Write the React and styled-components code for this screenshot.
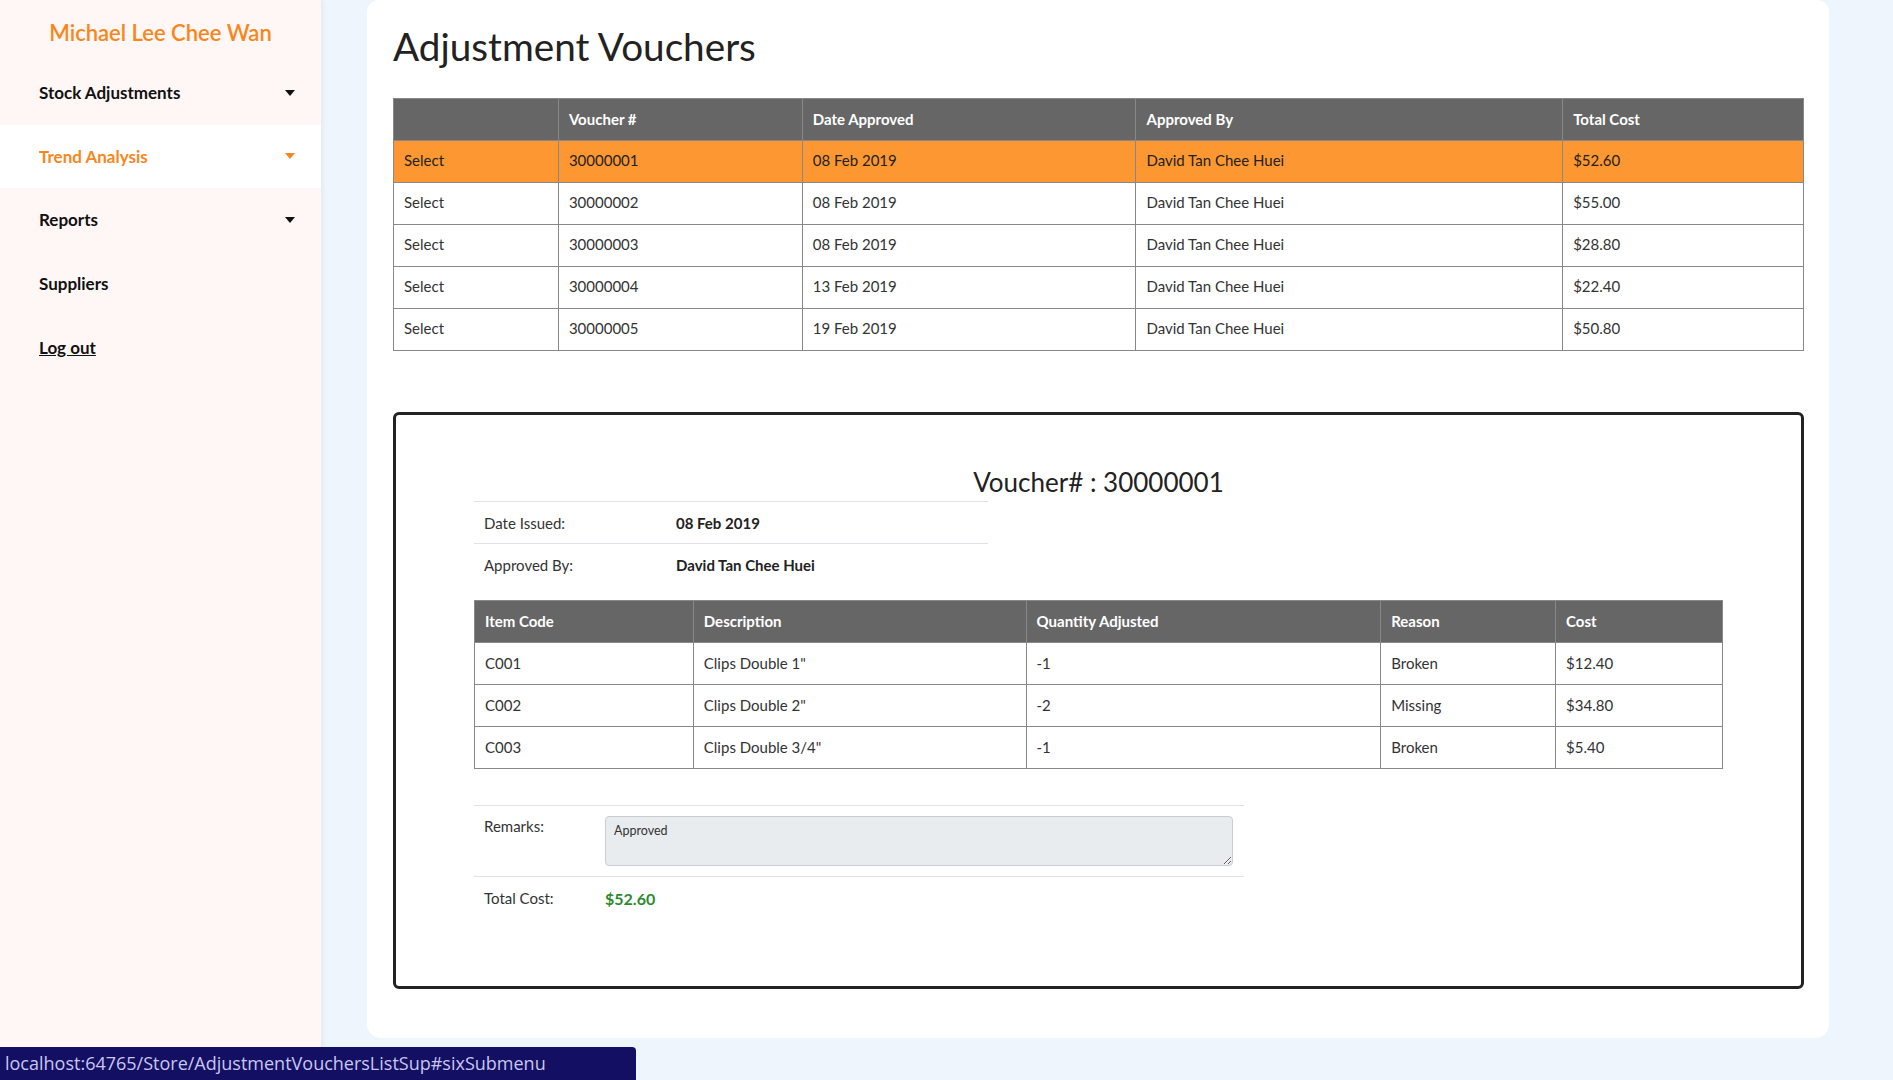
import React from "react";
import styled, { createGlobalStyle } from "styled-components";

const GlobalStyle = createGlobalStyle`
  html, body { margin: 0; padding: 0; }
  body {
    background: #eef5fd;
    font-family: Lato, "Open Sans", sans-serif;
    color: #222;
  }
  * { box-sizing: border-box; }
`;

const Layout = styled.div`
  display: flex;
  min-height: 1080px;
`;

const Sidebar = styled.nav`
  width: 321px;
  flex: 0 0 321px;
  background: #fff7f6;
  box-shadow: 2px 0 4px rgba(0, 0, 0, 0.05);
  min-height: 1080px;
`;

const UserName = styled.div`
  padding-top: 14px;
  height: 61px;
  line-height: 38px;
  text-align: center;
  font-size: 22px;
  color: #f7861c;
  font-weight: 600;
`;

const MenuList = styled.ul`
  list-style: none;
  margin: 0;
  padding: 0;
`;

const MenuItem = styled.li`
  height: 63.6px;
  display: flex;
  align-items: center;
  justify-content: space-between;
  padding: 0 26px 0 39px;
  font-size: 17px;
  font-weight: 700;
  color: ${(p) => (p.$active ? "#f7861c" : "#111")};
  background: ${(p) => (p.$active ? "#ffffff" : "transparent")};
  text-decoration: ${(p) => (p.$link ? "underline" : "none")};
`;

const Caret = styled.span`
  width: 0;
  height: 0;
  border-left: 5px solid transparent;
  border-right: 5px solid transparent;
  border-top: 6px solid ${(p) => (p.$active ? "#f7861c" : "#111")};
`;

const Main = styled.main`
  flex: 1;
  padding: 0 64px 42px 46px;
`;

const Card = styled.section`
  background: #fff;
  border-radius: 12px 12px 14px 14px;
  height: 1038px;
  padding: 20px 25px 0 26px;
`;

const Title = styled.h1`
  margin: 0 0 26px;
  font-size: 38.7px;
  line-height: 52px;
  font-weight: 400;
  color: #222;
`;

const Table = styled.table`
  width: 100%;
  border-collapse: collapse;
  font-size: 15px;
  color: #333;
`;

const HeadCell = styled.th`
  height: 42px;
  padding: ${(p) => (p.$raised ? "0 10px 2px" : "0 10px")};
  text-align: left;
  font-weight: 700;
  color: #fff;
  background: #666;
  border: 1px solid #888;
`;

const Row = styled.tr`
  background: ${(p) => (p.$selected ? "#fd9732" : "#fff")};
  color: ${(p) => (p.$selected ? "#222" : "#333")};
`;

const Cell = styled.td`
  height: 42px;
  padding: ${(p) => (p.$raised ? "0 10px 4px" : "0 10px")};
  border: 1px solid #888;
`;

const Detail = styled.div`
  margin-top: 61px;
  border: 3px solid #222;
  border-radius: 6px;
  height: 577px;
  padding: 50px 78px 0;
`;

const DetailTitle = styled.h2`
  margin: 0 0 2px;
  text-align: center;
  font-size: 26px;
  line-height: 34px;
  font-weight: 400;
  color: #222;
`;

const InfoTable = styled.table`
  width: ${(p) => p.$width};
  border-collapse: collapse;
  font-size: 15px;
  color: #333;
  margin: ${(p) => p.$margin || "0"};
`;

const InfoLabel = styled.td`
  width: ${(p) => p.$w};
  height: ${(p) => p.$h || "42px"};
  padding: ${(p) => p.$pad || "0 10px"};
  vertical-align: ${(p) => p.$va || "middle"};
  border-top: 1px solid #dee2e6;
`;

const InfoValue = styled.td`
  padding: ${(p) => p.$pad || "0 10px"};
  vertical-align: middle;
  font-weight: 700;
  color: ${(p) => p.$color || "#222"};
  font-size: ${(p) => p.$size || "15px"};
  border-top: 1px solid #dee2e6;
`;

const Remarks = styled.textarea`
  display: block;
  width: 628px;
  height: 50px;
  background: #e9ecef;
  border: 1px solid #c9ced4;
  border-radius: 4px;
  padding: 6px 8px;
  font-family: Lato, sans-serif;
  font-size: 12.5px;
  color: #333;
  resize: both;
`;

const StatusBar = styled.div`
  position: fixed;
  left: 0;
  bottom: 0;
  width: 636px;
  height: 33px;
  background: #130f63;
  color: #c9c6f0;
  border-top-right-radius: 4px;
  font-family: "Open Sans", "Noto Sans", sans-serif;
  font-size: 18px;
  line-height: 33px;
  padding-left: 5px;
  white-space: nowrap;
`;

const vouchers = [
  ["30000001", "08 Feb 2019", "David Tan Chee Huei", "$52.60"],
  ["30000002", "08 Feb 2019", "David Tan Chee Huei", "$55.00"],
  ["30000003", "08 Feb 2019", "David Tan Chee Huei", "$28.80"],
  ["30000004", "13 Feb 2019", "David Tan Chee Huei", "$22.40"],
  ["30000005", "19 Feb 2019", "David Tan Chee Huei", "$50.80"],
];

const items = [
  ["C001", 'Clips Double 1"', "-1", "Broken", "$12.40"],
  ["C002", 'Clips Double 2"', "-2", "Missing", "$34.80"],
  ["C003", 'Clips Double 3/4"', "-1", "Broken", "$5.40"],
];

const topCols = [165, 244, 334, 427, 241];
const itemCols = [219, 333, 355, 175, 167];

export default function App() {
  return (
    <>
      <GlobalStyle />
      <Layout>
        <Sidebar>
          <UserName>Michael Lee Chee Wan</UserName>
          <MenuList>
            <MenuItem>
              Stock Adjustments <Caret />
            </MenuItem>
            <MenuItem $active>
              Trend Analysis <Caret $active />
            </MenuItem>
            <MenuItem>
              Reports <Caret />
            </MenuItem>
            <MenuItem>Suppliers</MenuItem>
            <MenuItem $link>Log out</MenuItem>
          </MenuList>
        </Sidebar>
        <Main>
          <Card>
            <Title>Adjustment Vouchers</Title>
            <Table>
              <colgroup>
                {topCols.map((w, i) => (
                  <col key={i} style={{ width: w }} />
                ))}
              </colgroup>
              <thead>
                <tr>
                  <HeadCell $raised></HeadCell>
                  <HeadCell $raised>Voucher #</HeadCell>
                  <HeadCell $raised>Date Approved</HeadCell>
                  <HeadCell $raised>Approved By</HeadCell>
                  <HeadCell $raised>Total Cost</HeadCell>
                </tr>
              </thead>
              <tbody>
                {vouchers.map((v, i) => (
                  <Row key={v[0]} $selected={i === 0}>
                    <Cell $raised>Select</Cell>
                    {v.map((c, j) => (
                      <Cell $raised key={j}>
                        {c}
                      </Cell>
                    ))}
                  </Row>
                ))}
              </tbody>
            </Table>

            <Detail>
              <DetailTitle>Voucher# : 30000001</DetailTitle>
              <InfoTable $width="514px" $margin="0 0 14px">
                <tbody>
                  <tr>
                    <InfoLabel $w="192px">Date Issued:</InfoLabel>
                    <InfoValue>08 Feb 2019</InfoValue>
                  </tr>
                  <tr>
                    <InfoLabel $w="192px">Approved By:</InfoLabel>
                    <InfoValue>David Tan Chee Huei</InfoValue>
                  </tr>
                </tbody>
              </InfoTable>

              <Table>
                <colgroup>
                  {itemCols.map((w, i) => (
                    <col key={i} style={{ width: w }} />
                  ))}
                </colgroup>
                <thead>
                  <tr>
                    <HeadCell>Item Code</HeadCell>
                    <HeadCell>Description</HeadCell>
                    <HeadCell>Quantity Adjusted</HeadCell>
                    <HeadCell>Reason</HeadCell>
                    <HeadCell>Cost</HeadCell>
                  </tr>
                </thead>
                <tbody>
                  {items.map((it) => (
                    <Row key={it[0]}>
                      {it.map((c, j) => (
                        <Cell key={j}>{c}</Cell>
                      ))}
                    </Row>
                  ))}
                </tbody>
              </Table>

              <InfoTable $width="770px" $margin="36px 0 0">
                <tbody>
                  <tr>
                    <InfoLabel $w="121px" $h="71px" $pad="11px 10px 0" $va="top">
                      Remarks:
                    </InfoLabel>
                    <InfoValue $pad="10px 10px">
                      <Remarks readOnly defaultValue="Approved" />
                    </InfoValue>
                  </tr>
                  <tr>
                    <InfoLabel $w="121px" $h="44px">Total Cost:</InfoLabel>
                    <InfoValue $color="#2b8a2b" $size="16px">$52.60</InfoValue>
                  </tr>
                </tbody>
              </InfoTable>
            </Detail>
          </Card>
        </Main>
      </Layout>
      <StatusBar>localhost:64765/Store/AdjustmentVouchersListSup#sixSubmenu</StatusBar>
    </>
  );
}
